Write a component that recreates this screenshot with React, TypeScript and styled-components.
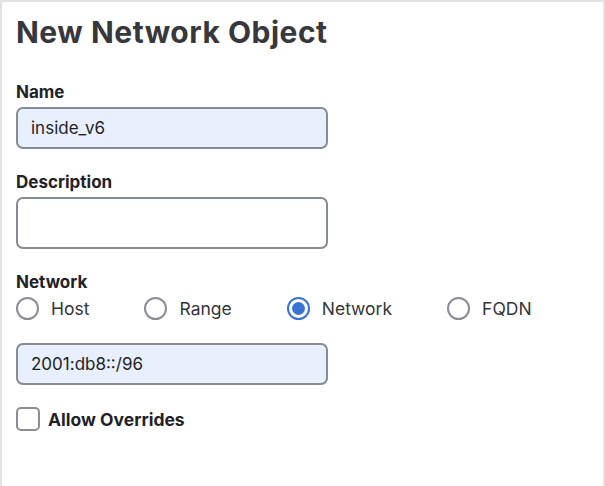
import styled, { createGlobalStyle } from 'styled-components';

const GlobalStyle = createGlobalStyle`
  html, body {
    margin: 0;
    padding: 0;
    background: #ffffff;
  }
  body {
    font-family: Inter, "Liberation Sans", Arial, sans-serif;
    color: #1f2226;
  }
`;

const Panel = styled.div`
  box-sizing: border-box;
  width: 605px;
  height: 486px;
  border: 2px solid #e3e3e3;
  border-bottom: none;
  padding: 11px 14px 0 14px;
`;

const Title = styled.h1`
  margin: 0 0 31px 0;
  font-family: Inter, Lato, sans-serif;
  font-weight: 700;
  font-size: 30px;
  line-height: 38px;
  letter-spacing: 0.5px;
  color: #37373c;
`;

const Field = styled.div`
  display: flex;
  flex-direction: column;
  margin-bottom: 23px;
`;

const Label = styled.label`
  font-size: 17px;
  font-weight: 700;
  line-height: 20px;
  color: #1f2226;
  margin-bottom: 5px;
`;

const TextInput = styled.div<{ $filled?: boolean; $tall?: boolean }>`
  box-sizing: border-box;
  width: 312px;
  height: ${({ $tall }) => ($tall ? '52px' : '42px')};
  display: flex;
  align-items: center;
  padding-left: 13px;
  border: 2px solid #878c93;
  border-radius: 7px;
  background: ${({ $filled }) => ($filled ? '#e8f0fe' : '#ffffff')};
  font-size: 17px;
  color: #1f2226;
`;

const RadioRow = styled.div`
  display: flex;
  align-items: center;
  gap: 55px;
  height: 23px;
`;

const RadioItem = styled.div`
  display: flex;
  align-items: center;
  gap: 12px;
  font-size: 17.5px;
  color: #33363a;
`;

const RadioCircle = styled.span<{ $checked?: boolean }>`
  box-sizing: border-box;
  width: 23px;
  height: 23px;
  border-radius: 50%;
  border: 2px solid ${({ $checked }) => ($checked ? '#3a73d3' : '#8a8e94')};
  display: flex;
  align-items: center;
  justify-content: center;
  &::after {
    content: '';
    display: ${({ $checked }) => ($checked ? 'block' : 'none')};
    width: 13px;
    height: 13px;
    border-radius: 50%;
    background: #3a73d3;
  }
`;

const CheckRow = styled.div`
  display: flex;
  align-items: center;
  gap: 8px;
  margin-top: -1px;
`;

const CheckBox = styled.span`
  box-sizing: border-box;
  width: 24px;
  height: 24px;
  border: 2px solid #8a8e94;
  border-radius: 5px;
`;

const CheckLabel = styled.span`
  font-size: 17.5px;
  font-weight: 700;
  color: #1f2226;
`;

const options = [
  { name: 'Host', checked: false },
  { name: 'Range', checked: false },
  { name: 'Network', checked: true },
  { name: 'FQDN', checked: false },
];

const App = () => {
  return (
    <>
      <GlobalStyle />
      <Panel>
        <Title>New Network Object</Title>
        <Field>
          <Label>Name</Label>
          <TextInput $filled>inside_v6</TextInput>
        </Field>
        <Field>
          <Label>Description</Label>
          <TextInput $tall />
        </Field>
        <Field>
          <Label>Network</Label>
          <RadioRow>
            {options.map((item) => (
              <RadioItem key={item.name}>
                <RadioCircle $checked={item.checked} />
                {item.name}
              </RadioItem>
            ))}
          </RadioRow>
        </Field>
        <Field>
          <TextInput $filled>2001:db8::/96</TextInput>
        </Field>
        <CheckRow>
          <CheckBox />
          <CheckLabel>Allow Overrides</CheckLabel>
        </CheckRow>
      </Panel>
    </>
  );
};

export default App;
